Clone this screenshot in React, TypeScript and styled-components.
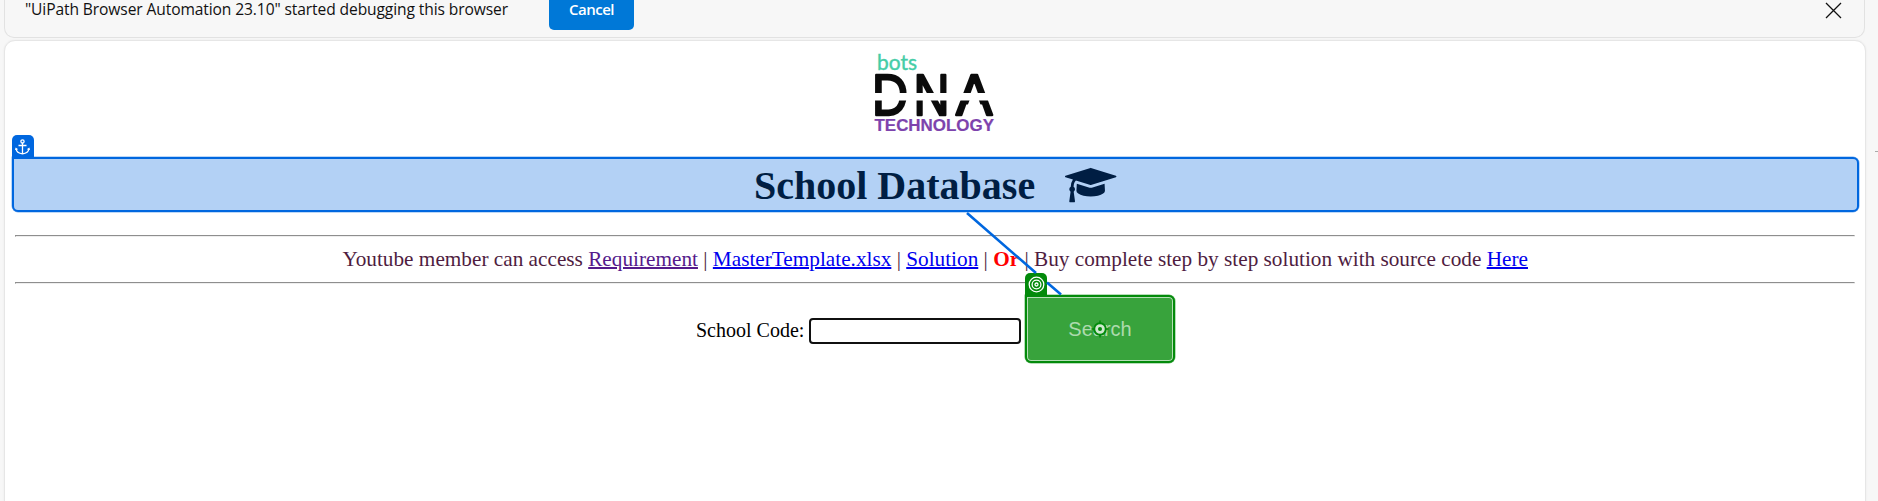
import React from 'react';
import styled, { createGlobalStyle } from 'styled-components';

const GlobalStyle = createGlobalStyle`
  html, body { margin: 0; padding: 0; background: #f7f7f7; overflow: hidden; }
  * { box-sizing: border-box; }
`;

const serif = '"Liberation Serif", "Times New Roman", serif';
const sans = '"Liberation Sans", Arial, sans-serif';

const Browser = styled.div`
  position: relative;
  width: 1878px;
  height: 501px;
  padding: 0 13px 0 4px;
  overflow: hidden;
  background: #f7f7f7;
`;

const InfoBar = styled.div`
  display: flex;
  align-items: flex-start;
  width: 1861px;
  height: 38px;
  padding: 0 22px 0 20px;
  background: #f7f7f7;
  border: 1px solid #e2e2e2;
  border-top: 0;
  border-radius: 0 0 10px 10px;
`;

const InfoText = styled.span`
  width: 524px;
  font: 15.6px/19px "Open Sans", "Noto Sans", sans-serif;
  letter-spacing: -0.11px;
  color: #111;
  white-space: nowrap;
`;

const CancelButton = styled.button`
  width: 85px;
  height: 30px;
  padding: 0 0 12px;
  border: 0;
  border-radius: 0 0 5px 5px;
  background: #0078d7;
  color: #fff;
  font: 600 15px/18px "Open Sans", "Noto Sans", sans-serif;
  letter-spacing: -0.5px;
`;

const CloseIcon = styled.svg`
  margin: 2px 0 0 auto;
`;

const Page = styled.main`
  display: flex;
  flex-direction: column;
  width: 1862px;
  height: 470px;
  margin-top: 2px;
  padding: 8px 7px 0;
  background: #fff;
  border: 1px solid #e6e6e6;
  border-radius: 11px 11px 0 0;
  box-shadow: 0 0 2px #e8e8e8;
`;

const Logo = styled.svg`
  display: block;
  flex: none;
  margin: 0 0 21px 858px;
`;

const Heading = styled.h1`
  position: relative;
  display: flex;
  align-items: center;
  width: 1847px;
  height: 55px;
  margin: 0 0 23px -0.5px;
  padding: 2px 0 0 740.5px;
  background: #b3d1f5;
  border: 2px solid #0067df;
  border-radius: 0 6px 6px 6px;
  box-shadow: 0 0 0 0.5px #7db1ef;
  color: #001e43;
  font: bold 40px/46px ${serif};
  white-space: nowrap;
`;

const CapIcon = styled.svg`
  margin: 0 0 1px 30px;
`;

const Badge = styled.span<{ $color: string }>`
  position: absolute;
  left: -2px;
  top: -24px;
  display: flex;
  align-items: center;
  justify-content: center;
  width: 22px;
  height: 23px;
  background: ${(p) => p.$color};
  border-radius: 5px 5px 0 0;
`;

const Rule = styled.hr`
  flex: none;
  width: 1840px;
  height: 2px;
  margin: 0 0 0 3px;
  border: 1px solid;
  border-color: #8e8e8e #eee #eee #8e8e8e;
`;

const Notice = styled.p`
  height: 45px;
  margin: 0;
  padding-left: 330.5px;
  color: #4f1d3f;
  font: 21.25px/44px ${serif};
  white-space: nowrap;
`;

const Link = styled.a<{ $visited?: boolean }>`
  color: ${(p) => (p.$visited ? '#551a8b' : '#0000ee')};
  text-decoration: underline 2px;
`;

const Or = styled.b`
  color: #ff0000;
`;

const SearchForm = styled.div`
  display: flex;
  align-items: center;
  height: 70px;
  margin-top: 9.5px;
  padding-left: 684px;
`;

const Label = styled.label`
  width: 113px;
  padding-top: 2px;
  color: #000;
  font: 20px/24px ${serif};
  white-space: nowrap;
`;

const CodeInput = styled.input`
  width: 212px;
  height: 26px;
  margin: 4px 4px 0 0;
  border: 2px solid #101010;
  border-radius: 4px;
  outline: none;
  background: #fff;
`;

const SearchButton = styled.div`
  position: relative;
  display: flex;
  align-items: center;
  justify-content: center;
  width: 150px;
  height: 68px;
  padding-top: 1px;
  border: 2px solid #038a0b;
  border-radius: 0 6px 6px 6px;
  background: #38a33c;
  box-shadow: inset 0 0 0 1px #b5dfb6, 0 0 0 0.5px #6fbb72;
  color: #addaae;
  font: 20px/24px ${sans};
`;

const ClickPoint = styled.svg`
  position: absolute;
  left: 64px;
  top: 23px;
`;

const Connector = styled.svg`
  position: absolute;
  left: 960px;
  top: 208px;
  pointer-events: none;
`;

const EdgeMark = styled.i`
  position: absolute;
  right: 0;
  top: 151px;
  width: 3px;
  height: 1px;
  background: #aaa;
`;

function BotsDnaLogo() {
  return (
    <Logo width="150" height="87" viewBox="0 0 150 87">
      <text x="7" y="20.5" fill="#45cda7" fontFamily="Lato, sans-serif" fontSize="21" textLength="40" lengthAdjust="spacingAndGlyphs" stroke="#45cda7" strokeWidth="0.4">bots</text>
      <g fill="#0b0b0b" stroke="#0b0b0b" strokeWidth="2.4" strokeLinejoin="round" fontFamily="Liberation Sans, sans-serif" fontSize="58">
        <text transform="translate(1.9 66) scale(.86 1)">D</text>
        <text transform="translate(43.5 66) scale(.86 1)">N</text>
        <text transform="translate(86 66) scale(.94 1)">A</text>
      </g>
      <rect x="0" y="44" width="130" height="7.5" fill="#fff" />
      <path d="M99.600 51h9.200l2 5.500H97.600z" fill="#fff" />
      <text x="4.5" y="81.5" fill="#7d43ad" stroke="#7d43ad" strokeWidth="0.2" fontFamily="Liberation Sans, sans-serif" fontWeight="bold" fontSize="16.5" textLength="119.5" lengthAdjust="spacingAndGlyphs">TECHNOLOGY</text>
    </Logo>
  );
}

export default function App() {
  return (
    <>
      <GlobalStyle />
      <Browser>
        <InfoBar>
          <InfoText>"UiPath Browser Automation 23.10" started debugging this browser</InfoText>
          <CancelButton>Cancel</CancelButton>
          <CloseIcon width="17" height="17" viewBox="0 0 17 17" stroke="#111" strokeWidth="1.3">
            <path d="M1 1l15 15M16 1L1 16" />
          </CloseIcon>
        </InfoBar>
        <Page>
          <BotsDnaLogo />
          <Heading>
            <Badge $color="#0067df">
              <svg width="15" height="16" viewBox="0 0 15 16" fill="none" stroke="#fff" strokeWidth="1.3">
                <circle cx="7.5" cy="2.4" r="1.6" />
                <path d="M7.5 4v11M3.5 6.5h8M1 9.5c.4 3.2 2.8 5 6.5 5.3 3.7-.3 6.1-2.1 6.5-5.3M.5 11L1 9.5l1.5 1M14.5 11L14 9.5l-1.5 1" />
              </svg>
            </Badge>
            School Database
            <CapIcon width="51.4" height="40" viewBox="0 0 2304 1792" fill="currentColor">
              <path d="M1774 836l18 316q4 69-82 128t-235 93.5-323 34.5-323-34.5-235-93.5-82-128l18-316 574 181q22 7 48 7t48-7zM2304 512q0 23-22 31l-1120 352q-4 1-10 1t-10-1l-652-206q-43 34-71 111.5t-34 178.5q63 36 63 109 0 69-58 107l58 433q2 14-8 25-9 11-24 11h-192q-15 0-24-11-10-11-8-25l58-433q-58-38-58-107 0-73 65-111 11-207 98-330l-333-104q-22-8-22-31t22-31l1120-352q4-1 10-1t10 1l1120 352q22 8 22 31z" />
            </CapIcon>
          </Heading>
          <Rule />
          <Notice>
            Youtube member can access <Link $visited>Requirement</Link> | <Link>MasterTemplate.xlsx</Link> | <Link>Solution</Link> | <Or>Or</Or> | Buy complete step by step solution with source code <Link>Here</Link>
          </Notice>
          <Rule />
          <SearchForm>
            <Label htmlFor="code">School Code:</Label>
            <CodeInput id="code" />
            <SearchButton role="button">
              <Badge $color="#038a0b">
                <svg width="17" height="17" viewBox="0 0 17 17" fill="none" stroke="#fff" strokeWidth="1.3">
                  <circle cx="8.5" cy="8.5" r="7.3" />
                  <circle cx="8.5" cy="8.5" r="4.4" />
                  <circle cx="8.5" cy="8.5" r="1.5" />
                </svg>
              </Badge>
              Search
              <ClickPoint width="18" height="18" viewBox="0 0 18 18">
                <path d="M9 .5v17M.5 9h17" stroke="#038a0b" strokeWidth="1.5" />
                <circle cx="9" cy="9" r="5.8" fill="#cfe8cf" stroke="#038a0b" strokeWidth="2" />
                <circle cx="9" cy="9" r="2" fill="#038a0b" />
              </ClickPoint>
            </SearchButton>
          </SearchForm>
        </Page>
        <Connector width="110" height="90" viewBox="0 0 110 90">
          <path d="M7 5L76 65M87 74.5L101 86.5" stroke="#0067df" strokeWidth="2.6" />
        </Connector>
        <EdgeMark />
      </Browser>
    </>
  );
}
